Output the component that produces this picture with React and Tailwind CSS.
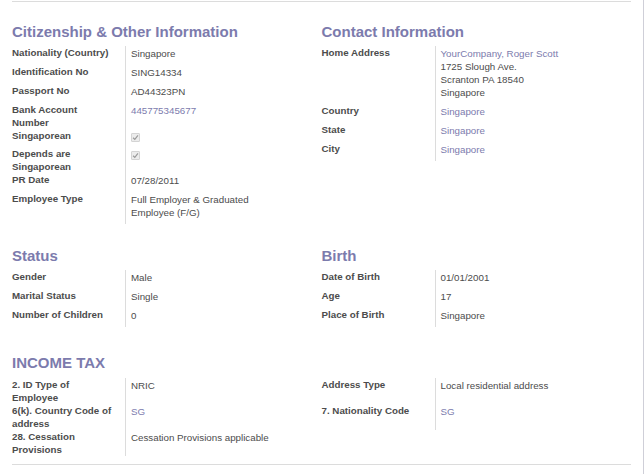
import React from 'react';

const LINK = 'text-[#7c7bad]';

const Check = () => (
  <span className="mt-[3px] flex h-[9px] w-[9px] items-center justify-center rounded-[1px] border border-[#d4d4d4] bg-[#ececec]">
    <svg width="7" height="7" viewBox="0 0 8 8">
      <path d="M1.2 4.3 L3.2 6.1 L6.8 1.6" fill="none" stroke="#9a9a9a" strokeWidth="1.3" />
    </svg>
  </span>
);

const Field = ({ label, children, rowClass = '' }) => (
  <>
    <div className={`pr-[11px] font-bold text-[#4c4c4c] ${rowClass}`}>{label}</div>
    <div className={`border-l border-[#dcdcdc] pl-[5px] pt-[1px] pb-[5px] text-[#4c4c4c] ${rowClass}`}>
      {children}
    </div>
  </>
);

const Group = ({ title, children, className = '', headClass = 'mt-[22px]' }) => (
  <div className={`pr-[30px] ${className}`}>
    {title && (
      <h2 className={`mb-[6px] text-[15px] font-bold leading-[16px] text-[#7c7bad] ${headClass}`}>{title}</h2>
    )}
    <div className="grid grid-cols-[113px_1fr] text-[9.75px] leading-[13px]">{children}</div>
  </div>
);

export default function App() {
  return (
    <div
      className="min-h-[474px] w-[644px] border-r border-[#cfcfd8] bg-white px-3 pt-px"
      style={{ fontFamily: '"Liberation Sans", Arial, sans-serif' }}
    >
      <div className="h-px bg-[#dcdcdc]" />

      <div className="grid grid-cols-2">
        <Group title="Citizenship & Other Information">
          <Field label="Nationality (Country)">Singapore</Field>
          <Field label="Identification No">SING14334</Field>
          <Field label="Passport No">AD44323PN</Field>
          <Field label="Bank Account Number"><span className={LINK}>445775345677</span></Field>
          <Field label="Singaporean"><Check /></Field>
          <Field label="Depends are Singaporean"><Check /></Field>
          <Field label="PR Date">07/28/2011</Field>
          <Field label="Employee Type">Full Employer &amp; Graduated Employee (F/G)</Field>
        </Group>

        <Group title="Contact Information" className="self-start">
          <Field label="Home Address">
            <div className={LINK}>YourCompany, Roger Scott</div>
            <div>1725 Slough Ave.</div>
            <div>Scranton PA 18540</div>
            <div>Singapore</div>
          </Field>
          <Field label="Country"><span className={LINK}>Singapore</span></Field>
          <Field label="State"><span className={LINK}>Singapore</span></Field>
          <Field label="City"><span className={LINK}>Singapore</span></Field>
        </Group>

        <Group title="Status" headClass="mt-[24px]">
          <Field label="Gender">Male</Field>
          <Field label="Marital Status">Single</Field>
          <Field label="Number of Children">0</Field>
        </Group>

        <Group title="Birth" headClass="mt-[24px]">
          <Field label="Date of Birth">01/01/2001</Field>
          <Field label="Age">17</Field>
          <Field label="Place of Birth">Singapore</Field>
        </Group>
      </div>

      <h2 className="mt-[28px] mb-[7px] text-[15px] font-bold leading-[16px] text-[#7c7bad]">INCOME TAX</h2>

      <div className="grid grid-cols-2">
        <Group className="self-start">
          <Field label="2. ID Type of Employee">NRIC</Field>
          <Field label="6(k). Country Code of address"><span className={LINK}>SG</span></Field>
          <Field label="28. Cessation Provisions">Cessation Provisions applicable</Field>
        </Group>
        <Group className="self-start">
          <Field label="Address Type" rowClass="h-[26px]">Local residential address</Field>
          <Field label="7. Nationality Code" rowClass="h-[26px]"><span className={LINK}>SG</span></Field>
        </Group>
      </div>

      <div className="mt-[8px] h-px bg-[#dcdcdc]" />
    </div>
  );
}
